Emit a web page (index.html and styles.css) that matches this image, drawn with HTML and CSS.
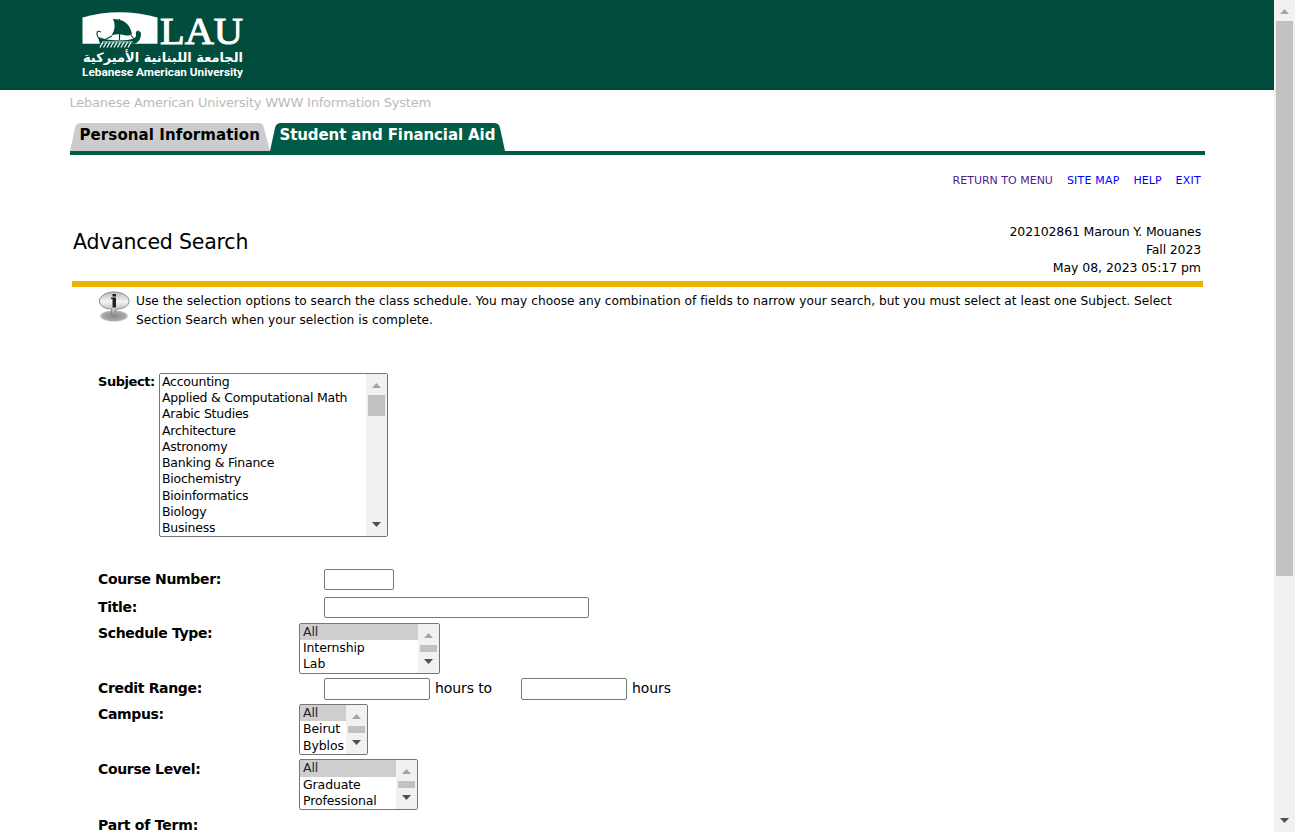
FILE: index.html
```html
<!DOCTYPE html>
<html lang="en">
<head>
<meta charset="utf-8">
<title>Advanced Search</title>
<link rel="stylesheet" href="styles.css">
</head>
<body>
<div class="window">
<div class="page">
  <header class="banner">
    <svg class="logo" width="170" height="72" viewBox="78 8 170 72">
      <path fill="#fff" d="M82.500 17.500Q119 7 157.500 17.500V43.700H82.500Z"/>
      <path fill="#004d3d" d="M113 19Q129 19 132 34Q129 36.500 124 35Q117 33.500 111.500 35.500Q117 27 113 19Z"/>
      <path fill="none" stroke="#004d3d" stroke-width="1.200" d="M119.500 19V40M112 36L106 39M131 35L134 39M101 32Q97 30 97 33.500Q97 39 103 40Q118 43 134 39.500Q137 38 136.500 34Q136 31 139 31"/>
      <path fill="#004d3d" d="M98 37Q108 40.500 120 40.500Q132 40.500 136 37L137 32Q141 30 141 34Q141 41 135 43.700H100Q99 41 98 37Z"/>
      <path fill="none" stroke="#fff" stroke-width="1.200" d="M103 42l-3 5.500M106.500 42l-3 5.500M110 42l-3 5.500M113.500 42l-3 5.500M117 42l-3 5.500M120.500 42l-3 5.500M124 42l-3 5.500M127.500 42l-3 5.500M131 42l-3 5.500"/>
      <path fill="none" stroke="#d8e6e2" stroke-width=".8" d="M102 41.800H133"/>
      <text class="logo-big" x="160" y="44" textLength="83" lengthAdjust="spacingAndGlyphs">LAU</text>
      <text class="logo-ar" x="83" y="62" textLength="160" lengthAdjust="spacingAndGlyphs">الجامعة اللبنانية الأميركية</text>
      <text class="logo-en" x="82" y="75.500" textLength="161" lengthAdjust="spacingAndGlyphs">Lebanese American University</text>
    </svg>
  </header>
  <p class="system"><span>Lebanese American University WWW Information System</span></p>
  <nav class="tabs">
    <a class="tab"><svg class="tab-shape" viewBox="0 0 200 28" preserveAspectRatio="none"><path fill="#ccc" d="M0 28L5 5Q6 0 11 0H189Q193 0 194 5L200 28Z"/></svg><span class="t1">Personal Information</span></a>
    <a class="tab active"><svg class="tab-shape" viewBox="0 0 235 28" preserveAspectRatio="none"><path fill="#005c46" d="M0 28L5 5Q6 0 11 0H224Q229 0 230 5L235 28Z"/></svg><span class="t2">Student and Financial Aid</span></a>
  </nav>
  <div class="links"><a class="visited l1">RETURN TO MENU</a><a class="l2">SITE MAP</a><a class="l3">HELP</a><a class="l4">EXIT</a></div>
  <section class="heading">
    <h1><span>Advanced Search</span></h1>
    <div class="who"><span class="w1">202102861 Maroun Y. Mouanes</span><br><span class="w2">Fall 2023</span><br><span class="w3">May 08, 2023 05:17 pm</span></div>
  </section>
  <section class="info">
    <svg width="34" height="34" viewBox="0 0 34 34">
      <defs>
        <linearGradient id="g" x1="0" y1="0" x2="0" y2="1"><stop offset="0" stop-color="#bbb"/><stop offset=".4" stop-color="#f4f4f4"/><stop offset="1" stop-color="#999"/></linearGradient>
        <radialGradient id="s"><stop offset="0" stop-color="#888"/><stop offset=".8" stop-color="#aaa"/><stop offset="1" stop-color="#fff"/></radialGradient>
      </defs>
      <ellipse cx="17" cy="26" rx="15" ry="6" fill="url(#s)"/>
      <path fill="url(#g)" stroke="#888" d="M2.500 11C2.500 6 9 2 17 2S32 6 32 11S26 19 20 19L14.500 26V19C8 19 2.500 16 2.500 11Z"/>
      <path fill="#222" d="M14 7.500H19V17.500H15.500V9H14ZM15.500 4H19V6.500H15.500Z"/>
    </svg>
    <p><span class="i1">Use the selection options to search the class schedule. You may choose any combination of fields to narrow your search, but you must select at least one Subject. Select</span><br><span class="i2">Section Search when your selection is complete.</span></p>
  </section>
  <section class="subject">
    <label class="lab">Subject:</label>
    <div class="list big">
      <ul><li>Accounting</li><li>Applied &amp; Computational Math</li><li>Arabic Studies</li><li>Architecture</li><li>Astronomy</li><li>Banking &amp; Finance</li><li>Biochemistry</li><li>Bioinformatics</li><li>Biology</li><li>Business</li></ul>
      <div class="bar"><i class="up"></i><b></b><i class="down"></i></div>
    </div>
  </section>
  <form class="fields">
    <div class="row r1"><label>Course Number:</label><div class="cell ind"><input class="in-a"></div></div>
    <div class="row r2"><label>Title:</label><div class="cell ind"><input class="in-b"></div></div>
    <div class="row r3"><label>Schedule Type:</label><div class="cell"><div class="list sched"><ul><li class="sel">All</li><li>Internship</li><li>Lab</li></ul><div class="bar"><i class="up"></i><b></b><i class="down"></i></div></div></div></div>
    <div class="row r4"><label>Credit Range:</label><div class="cell ind"><input class="in-c"><span class="h1">hours to</span><input class="in-c"><span class="h2">hours</span></div></div>
    <div class="row r5"><label>Campus:</label><div class="cell"><div class="list campus"><ul><li class="sel">All</li><li>Beirut</li><li>Byblos</li></ul><div class="bar"><i class="up"></i><b></b><i class="down"></i></div></div></div></div>
    <div class="row r6"><label>Course Level:</label><div class="cell"><div class="list level"><ul><li class="sel">All</li><li>Graduate</li><li>Professional</li></ul><div class="bar"><i class="up"></i><b></b><i class="down"></i></div></div></div></div>
    <div class="row r7"><label>Part of Term:</label></div>
  </form>
</div>
<div class="scroll"><i class="up"></i><b></b><i class="down"></i></div>
</div>
</body>
</html>
```
FILE: styles.css
```css
* { box-sizing: border-box; }
body { margin: 0; height: 832px; overflow: hidden; background: #fff; color: #000; font-family: Verdana, "DejaVu Sans", sans-serif; }
p, h1, ul { margin: 0; padding: 0; }
.window { display: flex; height: 832px; overflow: hidden; }
.page { width: 1274px; height: 832px; overflow: hidden; }
.banner { height: 90px; background: #004d3d; border-bottom: 1px solid #00412f; padding: 8px 0 0 78px; }
.logo { display: block; }
.logo text { fill: #fff; }
.logo-big { font: 400 38px "Liberation Serif", serif; stroke: #fff; stroke-width: 1px; }
.logo-ar { font: 700 13px "DejaVu Sans", sans-serif; }
.logo-en { font: 700 11.5px Roboto, sans-serif; }
.system { height: 33px; padding: 4px 0 0 69.5px; font-size: 13px; line-height: 18px; letter-spacing: -.22px; color: #bbb; }
.tabs { display: flex; height: 32px; width: 1135px; margin-left: 70px; border-bottom: 4px solid #005c46; }
.tab { display: grid; width: 200px; height: 28px; font-size: 15px; font-weight: 700; line-height: 24px; white-space: nowrap; letter-spacing: .1px; }
.tab > * { grid-area: 1 / 1; }
.tab > span { padding-left: 9.5px; }
.tab.active { width: 235px; color: #fff; letter-spacing: -.1px; }
.tab-shape { width: 100%; height: 28px; display: block; }
.links { display: flex; justify-content: flex-end; gap: 14px; width: 1201px; height: 67px; padding-top: 18px; font-size: 11px; line-height: 16px; color: #00f; }
.l2 { letter-spacing: .2px; }
.l4 { letter-spacing: .25px; }
.visited { color: #551a8b; }
.heading { display: flex; justify-content: space-between; width: 1131px; height: 65px; margin-left: 72px; padding: 0 2px 0 1px; border-bottom: 6px solid #ecb200; }
.heading h1 { font-size: 20.5px; font-weight: 400; line-height: 40px; letter-spacing: -.2px; }
.who { padding-top: 1px; text-align: right; font-size: 12.5px; line-height: 18px; white-space: nowrap; letter-spacing: -.15px; }
.w3 { letter-spacing: -.06px; }
.info { display: flex; height: 86px; padding: 3px 0 0 97px; }
.info p { padding: 2px 0 0 5px; font-size: 12.2px; line-height: 19px; white-space: nowrap; letter-spacing: .018px; }
.subject { display: flex; height: 196px; padding-left: 98px; }
.subject label { width: 61px; font-size: 13px; font-weight: 700; line-height: 17px; letter-spacing: -.45px; white-space: nowrap; }
.list { display: flex; border: 1px solid #767676; border-radius: 2px; overflow: hidden; background: #fff; }
.list ul { flex: 1; list-style: none; font-size: 12.5px; letter-spacing: -.12px; }
.list li { height: 16.22px; line-height: 16px; padding-left: 3px; white-space: nowrap; }
.list.big ul { letter-spacing: -.24px; }
.list.big li { padding-left: 2px; }
.list .sel { background: #cecece; color: #222; }
.campus li:nth-child(2) { height: 17px; }
.level .sel { height: 17px; }
.big { width: 229px; height: 164px; }
.bar { display: flex; flex-direction: column; align-items: center; width: 21px; background: #f1f1f1; }
.sched { width: 141px; height: 51px; }
.campus { width: 69px; height: 51px; }
.level { width: 119px; height: 51px; }
.up, .down { width: 9px; height: 5px; flex: none; }
.up { background: #a3a3a3; clip-path: polygon(50% 0, 100% 100%, 0 100%); }
.down { background: #505050; clip-path: polygon(0 0, 100% 0, 50% 100%); margin-top: auto; }
.bar b { width: 17px; height: 7px; margin-top: 7px; background: #c1c1c1; }
.bar .up { margin-top: 9px; }
.bar .down { margin-bottom: 9px; }
.big .bar b { height: 21px; }
.row { display: flex; padding-left: 98px; }
.row label { width: 201px; font-size: 14px; font-weight: 700; line-height: 20px; letter-spacing: -.34px; white-space: nowrap; }
.cell { display: flex; }
.ind { padding-left: 25px; }
.r1 { height: 28px; }
.r2 { height: 26px; }
.r3, .r5, .r6 { height: 55px; align-items: flex-start; }
.r4 { height: 26px; }
.row.r7 { padding-top: 1px; }
.row.r7 label { letter-spacing: -.2px; }
input { display: block; height: 21px; margin: 0; padding: 0; border: 1px solid #767676; border-radius: 2px; background: #fff; }
.in-a { width: 70px; }
.in-b { width: 265px; }
.in-c { width: 106px; height: 22px; }
.h1, .h2 { font-size: 14px; line-height: 20px; letter-spacing: -.1px; white-space: nowrap; padding-left: 5px; }
.h1 { width: 91px; }
.scroll { display: flex; flex-direction: column; align-items: center; width: 21px; height: 832px; background: #f1f1f1; }
.scroll b { width: 17px; height: 555px; margin-top: 7px; background: #c1c1c1; }
.scroll .up { margin-top: 9px; }
.scroll .down { margin-bottom: 9px; }
```
